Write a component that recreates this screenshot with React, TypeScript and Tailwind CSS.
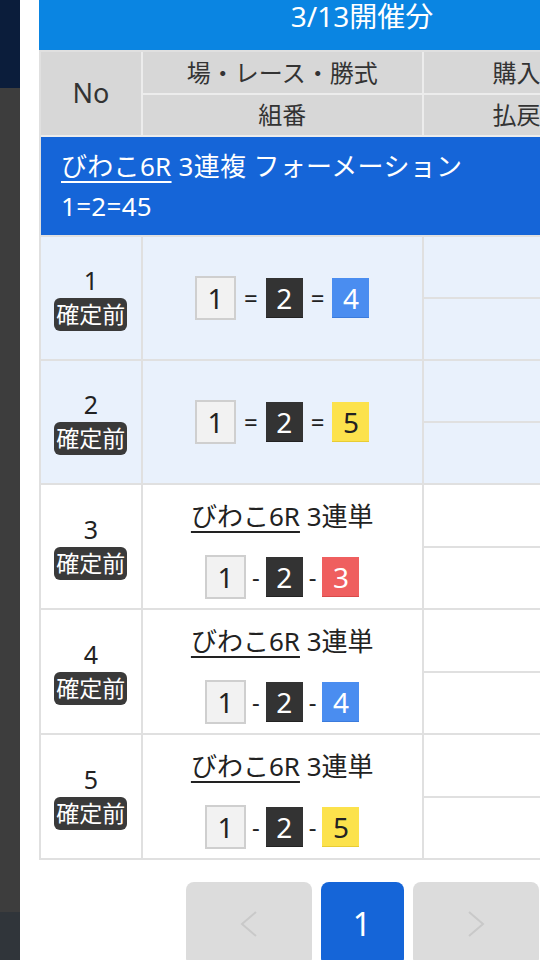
import React from "react";

type Pick = { n: number; bg: string; border: string; text: string };

const boat: Record<number, Pick> = {
  1: { n: 1, bg: "bg-[#f2f2f2]", border: "border-2 border-[#cfcfcf]", text: "text-[#222]" },
  2: { n: 2, bg: "bg-[#333333]", border: "border-b border-[#222]", text: "text-white" },
  3: { n: 3, bg: "bg-[#ef5f5f]", border: "border-b border-[#d84a4a]", text: "text-white" },
  4: { n: 4, bg: "bg-[#4a8df0]", border: "border-b border-[#3b7bdc]", text: "text-white" },
  5: { n: 5, bg: "bg-[#fce24c]", border: "border-b border-[#e8cc34]", text: "text-[#222]" },
};

type Bet = {
  no: number;
  title: boolean;
  sep: string;
  picks: number[];
  shaded: boolean;
};

const bets: Bet[] = [
  { no: 1, title: false, sep: "=", picks: [1, 2, 4], shaded: true },
  { no: 2, title: false, sep: "=", picks: [1, 2, 5], shaded: true },
  { no: 3, title: true, sep: "-", picks: [1, 2, 3], shaded: false },
  { no: 4, title: true, sep: "-", picks: [1, 2, 4], shaded: false },
  { no: 5, title: true, sep: "-", picks: [1, 2, 5], shaded: false },
];

function Box({ n }: { n: number }) {
  const b = boat[n];
  const size = n === 1 ? "w-[41px] h-[44px]" : "w-[37px] h-[40px]";
  return (
    <span
      className={`flex items-center justify-center text-[28px] leading-none ${size} ${b.bg} ${b.border} ${b.text}`}
    >
      {n}
    </span>
  );
}

function Combo({ picks, sep }: { picks: number[]; sep: string }) {
  return (
    <div className={`flex items-center ${sep === "=" ? "gap-[8px]" : "gap-[6px]"}`}>
      {picks.map((p, i) => (
        <React.Fragment key={i}>
          {i > 0 && <span className="text-[24px] text-[#222]">{sep}</span>}
          <Box n={p} />
        </React.Fragment>
      ))}
    </div>
  );
}

function Row({ bet }: { bet: Bet }) {
  const bg = bet.shaded ? "bg-[#e9f1fc]" : "bg-white";
  const h = bet.title ? "h-[125px]" : "h-[124px]";
  return (
    <div className={`flex ${h} ${bg}`}>
      <div className="flex w-[102px] flex-col items-center justify-center border-r-2 border-b-2 border-[#e0e0e0]">
        <span className="text-[25px] leading-[30px] text-[#222]">{bet.no}</span>
        <span className="mt-[3px] rounded-[6px] bg-[#3a3a3a] px-[2px] text-[23px] leading-[33px] text-white">
          確定前
        </span>
      </div>
      <div
        className={`flex w-[282px] flex-col items-center justify-center border-r-2 border-b-2 border-[#e0e0e0] ${
          bet.title ? "pt-[7px]" : ""
        }`}
      >
        {bet.title && (
          <div className="mb-[24px] text-[26px] leading-[30px] text-[#222]">
            <span className="underline decoration-2 underline-offset-[5px]">びわこ6R</span> 3連単
          </div>
        )}
        <Combo picks={bet.picks} sep={bet.sep} />
      </div>
      <div className="flex w-[262px] flex-col">
        <div className="flex-1 border-r-2 border-b-2 border-[#e0e0e0]" />
        <div className="flex-1 border-r-2 border-b-2 border-[#e0e0e0]" />
      </div>
    </div>
  );
}

function Chevron({ dir }: { dir: "l" | "r" }) {
  return (
    <svg width="18" height="26" viewBox="0 0 18 26" fill="none">
      <polyline
        points={dir === "l" ? "16,1 2,13 16,25" : "2,1 16,13 2,25"}
        stroke="#c9c9c9"
        strokeWidth="2"
      />
    </svg>
  );
}

export default function App() {
  return (
    <div
      className="flex h-[960px] w-[540px] overflow-hidden bg-white"
      style={{ fontFamily: '"Noto Sans", "Noto Sans CJK JP", sans-serif' }}
    >
      <div className="flex w-[20px] shrink-0 flex-col">
        <div className="h-[88px] bg-[#0b1d3b]" />
        <div className="flex-1 bg-[#3d3d3d]" />
        <div className="h-[48px] bg-[#30353a]" />
      </div>

      <div className="shrink-0 pl-[19px]">
        <div className="w-[646px]">
          <div className="flex h-[50px] justify-center bg-[#0a85e2]">
            <span className="pt-[1px] text-[28px] leading-[30px] text-white">3/13開催分</span>
          </div>

          <div className="border-t-2 border-l-2 border-[#e0e0e0]">
            <div className="flex bg-[#d7d7d7] text-[#333]">
              <div className="flex h-[85px] w-[102px] items-center justify-center border-r-2 border-b-2 border-[#ececec] text-[27px]">
                No
              </div>
              <div className="flex w-[282px] flex-col">
                <div className="flex h-[43px] items-center justify-center border-r-2 border-b-2 border-[#ececec] text-[24px]">
                  場・レース・勝式
                </div>
                <div className="flex h-[42px] items-center justify-center border-r-2 border-b-2 border-[#ececec] text-[24px]">
                  組番
                </div>
              </div>
              <div className="flex w-[262px] flex-col">
                <div className="flex h-[43px] items-center justify-center border-r-2 border-b-2 border-[#ececec] pr-[26px] text-[24px]">
                  購入金額
                </div>
                <div className="flex h-[42px] items-center justify-center border-r-2 border-b-2 border-[#ececec] pr-[26px] text-[24px]">
                  払戻金額
                </div>
              </div>
            </div>

            <div className="h-[100px] border-b-2 border-[#e0e0e0] bg-[#1565d8] px-[20px] pt-[9px] text-[26px] leading-[40px] tracking-[0.3px] text-white">
              <div>
                <span className="underline decoration-2 underline-offset-[5px]">びわこ6R</span> 3連複 フォーメーション
              </div>
              <div>1=2=45</div>
            </div>

            {bets.map((b) => (
              <Row key={b.no} bet={b} />
            ))}
          </div>

          <div className="mt-[22px] flex justify-center gap-[9px]">
            <div className="flex h-[84px] w-[126px] items-center justify-center rounded-[8px] bg-[#dcdcdc]">
              <Chevron dir="l" />
            </div>
            <div className="flex h-[84px] w-[83px] items-center justify-center rounded-[8px] bg-[#1565d8] text-[32px] text-white">
              1
            </div>
            <div className="flex h-[84px] w-[126px] items-center justify-center rounded-[8px] bg-[#dcdcdc]">
              <Chevron dir="r" />
            </div>
          </div>
        </div>
      </div>
    </div>
  );
}
